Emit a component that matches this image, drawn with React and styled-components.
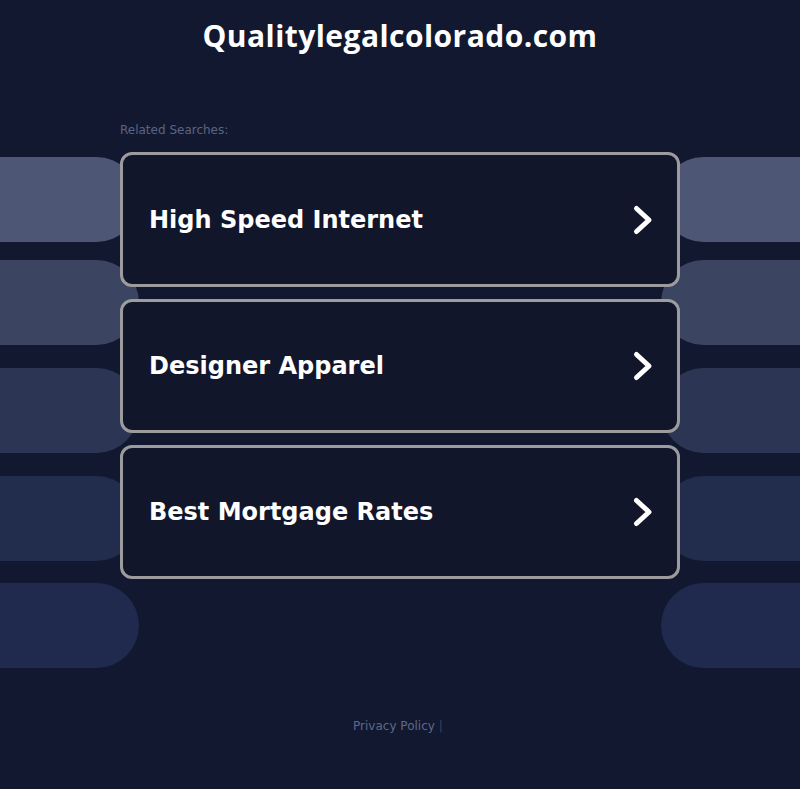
import React from "react";
import styled, { createGlobalStyle } from "styled-components";

const Global = createGlobalStyle`
  html, body { margin: 0; padding: 0; background: #121830; }
  body { font-family: "DejaVu Sans", sans-serif; }
  * { box-sizing: border-box; }
`;

const Page = styled.div`
  position: relative;
  width: 800px;
  height: 789px;
  overflow: hidden;
  background: #121830;
`;

const Backdrop = styled.div`
  position: absolute;
  left: 0;
  right: 0;
  top: 157px;
  display: flex;
  flex-direction: column;
  z-index: 0;
`;

const PillRow = styled.div`
  display: flex;
  justify-content: space-between;
  height: 85px;
  margin-top: ${(p) => p.$mt}px;
`;

const Pill = styled.div`
  width: 139px;
  height: 85px;
  background: ${(p) => p.$color};
  border-radius: ${(p) => (p.$side === "left" ? "0 43px 43px 0" : "43px 0 0 43px")};
`;

const Content = styled.div`
  position: relative;
  z-index: 1;
  display: flex;
  flex-direction: column;
  align-items: center;
`;

const Title = styled.h1`
  margin: 16px 0 0;
  font-family: "Open Sans", sans-serif;
  font-weight: 700;
  font-size: 30px;
  line-height: 40px;
  color: #ffffff;
  letter-spacing: 0.45px;
`;

const Label = styled.div`
  align-self: flex-start;
  margin: 66px 0 0 120px;
  font-size: 12px;
  line-height: 16px;
  color: #5b6483;
`;

const List = styled.div`
  margin-top: 14px;
  display: flex;
  flex-direction: column;
  gap: 12px;
  width: 560px;
`;

const Card = styled.a`
  display: flex;
  align-items: center;
  justify-content: space-between;
  height: ${(p) => p.$h}px;
  padding: 0 22px 0 26px;
  background: #11162b;
  border: 3px solid #9c9c9e;
  border-radius: 12px;
  color: #ffffff;
  text-decoration: none;
`;

const CardText = styled.span`
  font-family: "DejaVu Sans", sans-serif;
  font-weight: 700;
  font-size: 24px;
  letter-spacing: 0px;
`;

const Footer = styled.div`
  margin-top: 139px;
  margin-right: 4px;
  font-size: 12px;
  line-height: 16px;
  color: #5f6888;
`;

const Sep = styled.span`
  color: #3a4260;
  margin-left: 4px;
`;

const Chevron = () => (
  <svg width="24" height="32" viewBox="0 0 24 32">
    <path d="M5.5 4.5 L18 16 L5.5 27.5" fill="none" stroke="#fff" strokeWidth="5" strokeLinecap="round" strokeLinejoin="round" />
  </svg>
);

const rows = [
  { c: "#4d5674", mt: 0 },
  { c: "#3b4461", mt: 18 },
  { c: "#2c3554", mt: 23 },
  { c: "#222c4d", mt: 23 },
  { c: "#1f2a4e", mt: 22 },
];
const items = [
  { t: "High Speed Internet", h: 135 },
  { t: "Designer Apparel", h: 134 },
  { t: "Best Mortgage Rates", h: 134 },
];

export default function App() {
  return (
    <Page>
      <Global />
      <Backdrop>
        {rows.map((r, i) => (
          <PillRow key={i} $mt={r.mt}>
            <Pill $side="left" $color={r.c} />
            <Pill $side="right" $color={r.c} />
          </PillRow>
        ))}
      </Backdrop>
      <Content>
        <Title>Qualitylegalcolorado.com</Title>
        <Label>Related Searches:</Label>
        <List>
          {items.map((it) => (
            <Card key={it.t} href="#" $h={it.h}>
              <CardText>{it.t}</CardText>
              <Chevron />
            </Card>
          ))}
        </List>
        <Footer>
          Privacy Policy<Sep>|</Sep>
        </Footer>
      </Content>
    </Page>
  );
}
